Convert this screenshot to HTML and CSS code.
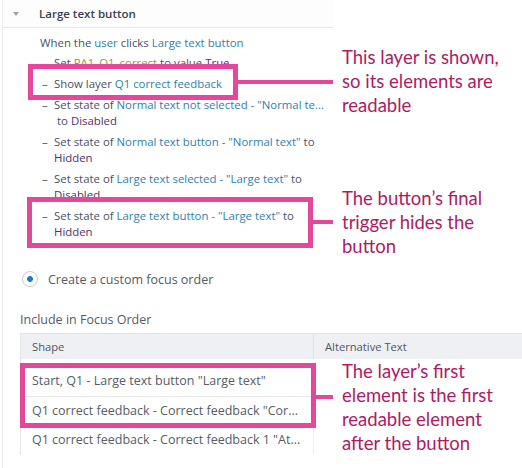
FILE: index.html
```html
<!DOCTYPE html>
<html>
<head>
<meta charset="utf-8">
<link rel="stylesheet" href="styles.css">
</head>
<body>
<div class="app">
  <div class="trigger-head">
    <span class="caret"></span>
    <span class="head-title">Large text button</span>
  </div>
  <div class="trigger-body">
    <div class="when">When the <span class="lnk">user</span> clicks <span class="lnk">Large text button</span></div>
    <ul class="actions">
      <li><span class="dash">–</span><span class="txt">Set <span class="var">PA1_Q1_correct</span> to value <span class="val">True</span></span></li>
      <li><span class="dash">–</span><span class="txt">Show layer <span class="lnk">Q1 correct feedback</span></span></li>
      <li><span class="dash">–</span><span class="txt">Set state of <span class="lnk">Normal text not selected - "Normal te...</span><br><span class="cont">to <span class="val">Disabled</span></span></span></li>
      <li><span class="dash">–</span><span class="txt">Set state of <span class="lnk">Normal text button - "Normal text"</span> to<br><span class="val">Hidden</span></span></li>
      <li><span class="dash">–</span><span class="txt">Set state of <span class="lnk">Large text selected - "Large text"</span> to<br><span class="val">Disabled</span></span></li>
      <li><span class="dash">–</span><span class="txt">Set state of <span class="lnk">Large text button - "Large text"</span> to<br><span class="val">Hidden</span></span></li>
    </ul>
  </div>
  <div class="focus">
    <div class="radio-row"><span class="radio"></span><span class="radio-label">Create a custom focus order</span></div>
    <div class="include">Include in Focus Order</div>
    <div class="table">
      <div class="thead">
        <div class="th th-shape">Shape</div>
        <div class="th">Alternative Text</div>
      </div>
      <div class="tbody">
        <div class="tr"><div class="td">Start, Q1 - Large text button "Large text"</div><div class="td"></div></div>
        <div class="tr"><div class="td">Q1 correct feedback - Correct feedback "Cor...</div><div class="td"></div></div>
        <div class="tr"><div class="td">Q1 correct feedback - Correct feedback 1 "At...</div><div class="td"></div></div>
      </div>
    </div>
  </div>
</div>

<div class="hl hl1"></div>
<div class="wire wire1"></div>
<div class="note note1">This layer is shown,<br>so its elements are<br>readable</div>

<div class="hl hl2"></div>
<div class="wire wire2"></div>
<div class="note note2">The button’s final<br>trigger hides the<br>button</div>

<div class="hl hl3"></div>
<div class="wire wire3"></div>
<div class="note note3">The layer’s first<br>element is the first<br>readable element<br>after the button</div>
</body>
</html>
```

FILE: styles.css
```css
html, body {
  margin: 0;
  padding: 0;
}
body {
  width: 522px;
  height: 468px;
  overflow: hidden;
  background: #ffffff;
  position: relative;
  font-family: "Open Sans", "Noto Sans", sans-serif;
  color: #4a5262;
}
.app {
  margin-left: 2px;
  border-left: 1px solid #ececec;
  height: 468px;
}
.trigger-head {
  width: 330px;
  height: 27px;
  border-bottom: 1px solid #e8e8e8;
  background: #fdfdfd;
  display: flex;
  align-items: center;
}
.caret {
  width: 0;
  height: 0;
  margin-left: 10px;
  border-left: 3.5px solid transparent;
  border-right: 3.5px solid transparent;
  border-top: 4px solid #a4a4a4;
}
.head-title {
  margin-left: 20px;
  font-size: 11.5px;
  font-weight: 600;
  color: #3c4150;
}
.trigger-body {
  width: 330px;
  padding-top: 7px;
  font-size: 11.4px;
  line-height: 16px;
}
.when {
  padding-left: 37px;
  color: #45526a;
}
.lnk { color: #2f80b4; }
.var { color: #9d9a1c; }
.val { color: #55306a; }
.actions {
  list-style: none;
  margin: 4px 0 0 0;
  padding: 0 0 0 39px;
  display: flex;
  flex-direction: column;
  row-gap: 5px;
}
.actions li {
  display: flex;
  white-space: nowrap;
}
.dash {
  width: 12px;
  flex: none;
  color: #555;
}
.txt { color: #45526a; }
.cont { margin-left: 3px; }
.focus {
  padding-left: 17px;
}
.radio-row {
  display: flex;
  align-items: center;
  margin-top: 31px;
  height: 16px;
}
.radio {
  width: 14px;
  height: 14px;
  margin-left: 2px;
  border: 1px solid #c9cdd2;
  border-radius: 50%;
  background: radial-gradient(circle, #1a7bd3 0 2.6px, #ffffff 3.2px);
  flex: none;
}
.radio-label {
  margin-left: 10px;
  font-size: 12.5px;
  color: #555a66;
}
.include {
  margin-top: 25px;
  font-size: 12.5px;
  line-height: 16px;
  color: #555a66;
}
.table {
  margin-top: 5px;
  width: 520px;
  border-left: 1px solid #e2e4e7;
  height: 122px;
}
.thead {
  display: grid;
  grid-template-columns: 293px 1fr;
  height: 25px;
  background: #eef0f3;
  border-top: 1px solid #e0e3e7;
}
.th {
  font-size: 11.2px;
  line-height: 25px;
  padding-left: 11px;
  color: #515663;
}
.th-shape {
  border-right: 1px solid #dde0e4;
}
.tbody {
  padding-top: 8px;
}
.tr {
  display: grid;
  grid-template-columns: 293px 1fr;
  height: 29px;
}
.tr + .tr .td:first-child {
  border-top: 1px solid #e6e6e6;
}
.td {
  font-size: 12.5px;
  line-height: 28px;
  padding-left: 11px;
  color: #585c66;
  white-space: nowrap;
  overflow: hidden;
}
.td:first-child {
  border-right: 1px solid #eeeeee;
}

/* annotation callouts overlaid on the screenshot */
.hl {
  position: absolute;
  border: 5px solid #e5489a;
  box-sizing: border-box;
}
.hl1 { left: 28px; top: 64px; width: 210px; height: 36px; }
.hl2 { left: 27px; top: 197px; width: 286px; height: 51px; }
.hl3 { left: 20px; top: 363px; width: 296px; height: 65px; }
.wire {
  position: absolute;
  height: 4px;
  background: #e5489a;
}
.wire1 { left: 238px; top: 80px; width: 95px; }
.wire2 { left: 313px; top: 220px; width: 20px; }
.wire3 { left: 316px; top: 395px; width: 17px; }
.note {
  position: absolute;
  left: 342px;
  font-family: "Lato", "Open Sans", sans-serif;
  font-size: 18.5px;
  line-height: 24px;
  color: #b11a62;
  background: transparent;
}
.note1 { top: 45px; }
.note2 { top: 186px; }
.note3 { top: 359px; }
```
